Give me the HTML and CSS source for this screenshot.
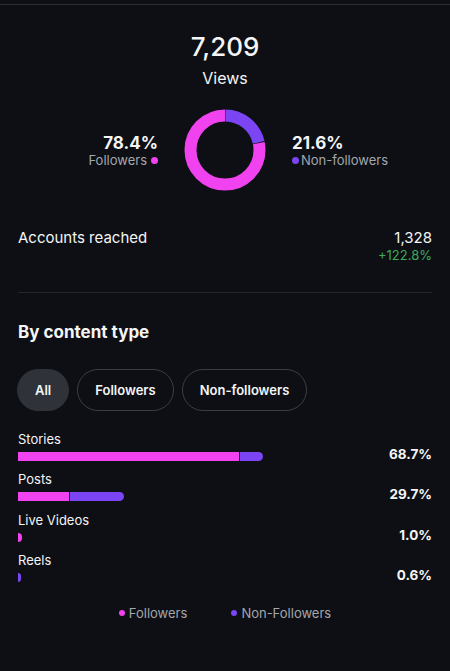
FILE: index.html
```
<!DOCTYPE html>
<html lang="en">
<head>
<meta charset="utf-8">
<link rel="stylesheet" href="styles.css">
</head>
<body>
<div class="topline"></div>
<section class="views">
  <div class="views-num">7,209</div>
  <div class="views-label">Views</div>
  <div class="split">
    <div class="side side-left">
      <div class="pct">78.4%</div>
      <div class="sub">Followers<span class="dot dot-pink"></span></div>
    </div>
    <svg class="donut" width="82" height="82" viewBox="0 0 82 82">
      <g transform="rotate(-90 41 41)">
        <circle cx="41" cy="41" r="34.5" fill="none" stroke="#7b45f3" stroke-width="12" stroke-dasharray="46 300" stroke-dashoffset="-0.4"></circle>
        <circle cx="41" cy="41" r="34.5" fill="none" stroke="#f043ef" stroke-width="12" stroke-dasharray="169.2 300" stroke-dashoffset="-47.2"></circle>
      </g>
    </svg>
    <div class="side side-right">
      <div class="pct">21.6%</div>
      <div class="sub"><span class="dot dot-purple"></span>Non-followers</div>
    </div>
  </div>
</section>

<section class="reach">
  <div class="reach-label">Accounts reached</div>
  <div class="reach-values">
    <div class="reach-num">1,328</div>
    <div class="reach-delta">+122.8%</div>
  </div>
</section>

<div class="divider"></div>

<h2 class="section-title">By content type</h2>

<div class="pills">
  <div class="pill pill-active">All</div>
  <div class="pill">Followers</div>
  <div class="pill">Non-followers</div>
</div>

<div class="rows">
  <div class="row">
    <div class="row-label">Stories</div>
    <div class="bar"><span class="seg seg-pink" style="width:221px"></span><span class="seg seg-purple" style="width:23px"></span></div>
    <div class="row-pct">68.7%</div>
  </div>
  <div class="row">
    <div class="row-label">Posts</div>
    <div class="bar"><span class="seg seg-pink" style="width:51px"></span><span class="seg seg-purple" style="width:54px"></span></div>
    <div class="row-pct">29.7%</div>
  </div>
  <div class="row">
    <div class="row-label">Live Videos</div>
    <div class="bar"><span class="seg seg-pink" style="width:4px"></span></div>
    <div class="row-pct">1.0%</div>
  </div>
  <div class="row">
    <div class="row-label">Reels</div>
    <div class="bar"><span class="seg seg-purple" style="width:3px"></span></div>
    <div class="row-pct">0.6%</div>
  </div>
</div>

<div class="legend">
  <div class="legend-item"><span class="dot dot-pink"></span>Followers</div>
  <div class="legend-item"><span class="dot dot-purple"></span>Non-Followers</div>
</div>
</body>
</html>
```

FILE: styles.css
```
* { box-sizing: border-box; }
html, body {
  margin: 0;
  padding: 0;
  background: #0d0f14;
  color: #f4f5f6;
  font-family: Inter, "Noto Sans", "Liberation Sans", sans-serif;
  width: 450px;
  height: 671px;
  overflow: hidden;
}
.topline {
  margin-top: 4px;
  height: 1px;
  background: #2c2f35;
}
.views {
  text-align: center;
  padding-top: 26px;
}
.views-num {
  font-size: 26px;
  line-height: 32px;
  font-weight: 500;
}
.views-label {
  margin-top: 4px;
  font-size: 16px;
  line-height: 22px;
  font-weight: 400;
}
.split {
  margin-top: 20px;
  display: grid;
  grid-template-columns: 1fr 82px 1fr;
  column-gap: 26px;
  align-items: center;
}
.donut { display: block; }
.side { padding-top: 2px; }
.side-left { text-align: right; }
.side-right { text-align: left; }
.pct {
  font-size: 17px;
  line-height: 18px;
  font-weight: 700;
}
.sub {
  font-size: 13px;
  line-height: 17px;
  color: #a4a7ac;
  display: flex;
  align-items: center;
}
.side-left .sub { justify-content: flex-end; }
.side-left .sub .dot { margin-left: 4px; }
.side-right .sub .dot { margin-right: 2px; }
.dot {
  display: inline-block;
  width: 7px;
  height: 7px;
  border-radius: 50%;
  flex: none;
}
.dot-pink { background: #f043ef; }
.dot-purple { background: #7b45f3; }

.reach {
  margin-top: 37px;
  padding: 0 18px;
  display: flex;
  justify-content: space-between;
  align-items: flex-start;
}
.reach-label {
  font-size: 15px;
  line-height: 20px;
}
.reach-values { text-align: right; }
.reach-num {
  font-size: 15px;
  line-height: 20px;
}
.reach-delta {
  font-size: 13px;
  line-height: 14px;
  color: #3daa5c;
}
.divider {
  margin: 30px 18px 0;
  height: 1px;
  background: #23262b;
}
.section-title {
  margin: 28px 18px 0;
  font-size: 17px;
  line-height: 22px;
  font-weight: 700;
}
.pills {
  margin: 26px 17px 0;
  display: flex;
  gap: 8px;
}
.pill {
  height: 42px;
  padding: 0 17px;
  border: 1px solid #3a3d43;
  border-radius: 21px;
  display: flex;
  align-items: center;
  font-size: 13px;
  font-weight: 600;
}
.pill-active {
  background: #2f3238;
  border-color: #2f3238;
}
.rows {
  margin: 19px 18px 0;
  display: flex;
  flex-direction: column;
  gap: 9.3px;
}
.row {
  display: grid;
  grid-template-columns: 1fr auto;
  grid-template-rows: 18px 9px;
  row-gap: 4px;
}
.row-label {
  grid-column: 1 / 3;
  font-size: 13px;
  line-height: 18px;
}
.bar {
  grid-column: 1;
  grid-row: 2;
  display: flex;
  gap: 1px;
  height: 9px;
}
.seg {
  display: block;
  height: 9px;
}
.seg:last-child { border-radius: 0 4.5px 4.5px 0; }
.row-pct {
  grid-column: 2;
  grid-row: 2;
  align-self: start;
  font-size: 13.5px;
  line-height: 5px;
  font-weight: 700;
}
.seg-pink { background: #f043ef; }
.seg-purple { background: #7b45f3; }
.legend {
  margin-top: 22px;
  display: flex;
  justify-content: center;
  gap: 44px;
  font-size: 13px;
  line-height: 18px;
  color: #a4a7ac;
}
.legend-item {
  display: flex;
  align-items: center;
  gap: 4px;
}
.legend .dot { width: 6px; height: 6px; }
```
